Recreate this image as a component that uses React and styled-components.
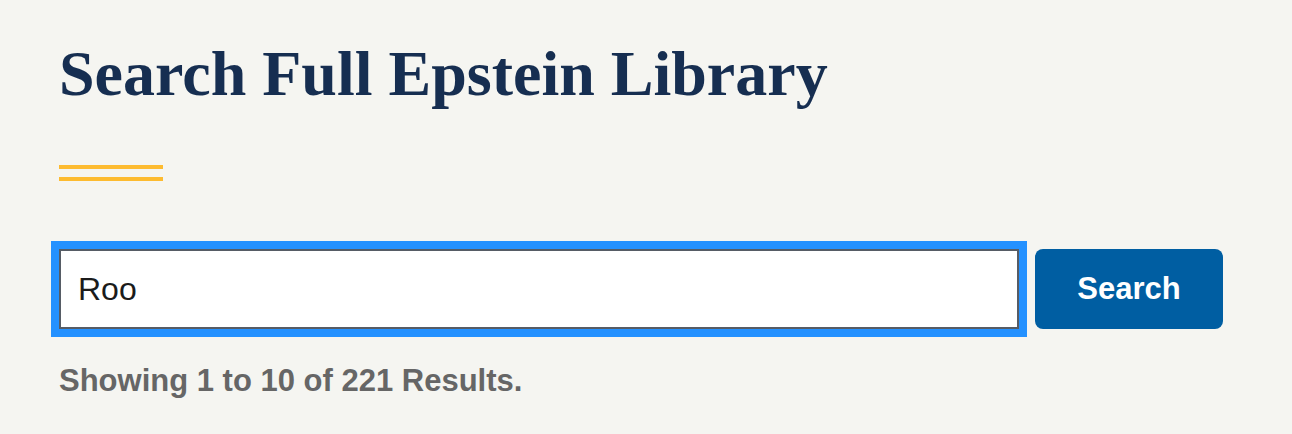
import React, { useState } from "react";
import styled, { createGlobalStyle } from "styled-components";

const Global = createGlobalStyle`
  html, body {
    margin: 0;
    padding: 0;
    background: #f5f5f1;
  }
`;

const App = () => {
  const [query, setQuery] = useState("Roo");

  return (
    <Page>
      <Global />
      <Title>Search Full Epstein Library</Title>
      <Rule />
      <SearchForm onSubmit={(e) => e.preventDefault()}>
        <SearchInput
          type="text"
          value={query}
          onChange={(e) => setQuery(e.target.value)}
        />
        <SearchButton type="submit">Search</SearchButton>
      </SearchForm>
      <ResultCount>Showing 1 to 10 of 221 Results.</ResultCount>
    </Page>
  );
};

export default App;

const Page = styled.div`
  padding: 0 59px;
  height: 434px;
  box-sizing: border-box;
  overflow: hidden;
`;

const Title = styled.h1`
  margin: 0;
  padding-top: 36px;
  font-family: "Liberation Serif", serif;
  font-weight: bold;
  font-size: 64px;
  line-height: 76px;
  color: #162e51;
  white-space: nowrap;
`;

const Rule = styled.div`
  width: 104px;
  height: 16px;
  box-sizing: border-box;
  border-top: 4px solid #fdbb30;
  border-bottom: 4px solid #fdbb30;
  margin-top: 53px;
`;

const SearchForm = styled.form`
  display: flex;
  gap: 16px;
  margin-top: 68px;
`;

const SearchInput = styled.input`
  width: 960px;
  height: 80px;
  box-sizing: border-box;
  border: 2px solid #565c65;
  outline: 8px solid #2491ff;
  background: #fff;
  padding: 0 17px;
  font-family: "Liberation Sans", Arial, sans-serif;
  font-size: 32px;
  color: #1b1b1b;
`;

const SearchButton = styled.button`
  width: 188px;
  height: 80px;
  border: 0;
  border-radius: 8px;
  background: #005ea2;
  color: #fff;
  font-family: "Liberation Sans", Arial, sans-serif;
  font-weight: bold;
  font-size: 31px;
`;

const ResultCount = styled.p`
  margin: 34px 0 0;
  font-family: "Liberation Sans", Arial, sans-serif;
  font-weight: bold;
  font-size: 31px;
  color: #666;
`;
